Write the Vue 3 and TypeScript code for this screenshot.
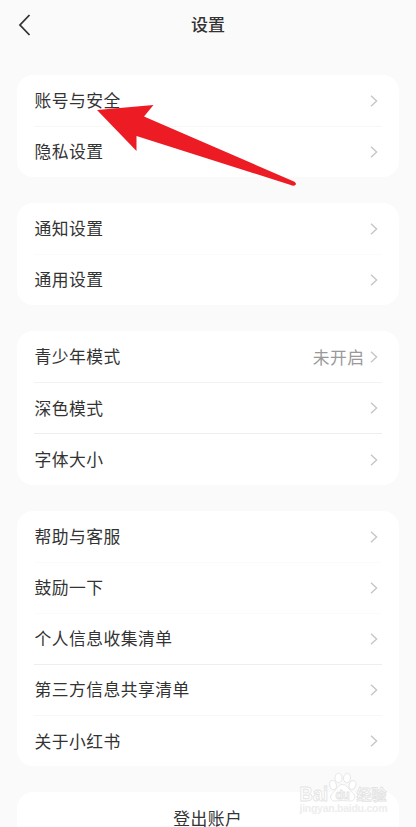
<script setup lang="ts">
type Tone = 'none' | 'faint' | 'soft' | 'light' | 'clear'

interface Item {
  label: string
  value?: string
  line: Tone
}

const groups: Item[][] = [
  [
    { label: '账号与安全', line: 'soft' },
    { label: '隐私设置', line: 'none' },
  ],
  [
    { label: '通知设置', line: 'faint' },
    { label: '通用设置', line: 'none' },
  ],
  [
    { label: '青少年模式', value: '未开启', line: 'light' },
    { label: '深色模式', line: 'clear' },
    { label: '字体大小', line: 'none' },
  ],
  [
    { label: '帮助与客服', line: 'faint' },
    { label: '鼓励一下', line: 'faint' },
    { label: '个人信息收集清单', line: 'clear' },
    { label: '第三方信息共享清单', line: 'soft' },
    { label: '关于小红书', line: 'none' },
  ],
]
</script>

<template>
  <main class="screen">
    <header class="bar">
      <svg class="back" width="14" height="24" viewBox="0 0 14 24">
        <path d="M11.5 2 L2 12 L11.5 22" />
      </svg>
      <h1 class="title">设置</h1>
    </header>

    <div class="groups">
      <section v-for="(group, g) in groups" :key="g" class="card">
        <div v-for="item in group" :key="item.label" class="row" :class="item.line">
          <span class="label">{{ item.label }}</span>
          <span v-if="item.value" class="value">{{ item.value }}</span>
          <svg class="chevron" width="8" height="12" viewBox="0 0 8 12">
            <path d="M1 0.7 L6.6 6 L1 11.3" />
          </svg>
        </div>
      </section>
      <section class="card">
        <div class="row logout"><span class="label">登出账户</span></div>
      </section>
    </div>

    <svg class="arrow" width="204" height="90" viewBox="94 100 204 90">
      <path d="M97 110 L153.500 105 L144 116.500 L294.500 181.800 Q297.500 184.200 294.500 185.500 Q293 186 290 184.800 L136.500 136 L136.500 151 Z" />
    </svg>

    <svg class="watermark" width="98" height="48" viewBox="294 770 98 48">
      <g class="mark">
        <ellipse cx="333" cy="785" rx="3.300" ry="4.700" transform="rotate(-14 333 785)" />
        <ellipse cx="338.500" cy="778" rx="3.500" ry="4.700" />
        <ellipse cx="347" cy="778" rx="3.500" ry="4.700" transform="rotate(8 347 778)" />
        <ellipse cx="352.500" cy="785" rx="3.300" ry="4.600" transform="rotate(16 352.500 785)" />
        <path d="M342.500 784.500 C338 784.500 337 789.500 333 792.500 C328.500 796.500 331 801.500 335.500 801 Q342.500 800 349.500 801 C354.500 801.500 357 796.500 352.500 792.500 C348 789.500 347.500 784.500 342.500 784.500 Z" />
        <text class="brand" x="299.500" y="800.500" textLength="28.5" lengthAdjust="spacingAndGlyphs">Bai</text>
        <text class="du" x="335.500" y="798.500" textLength="14">du</text>
        <text class="cn" x="356.500" y="799.500" textLength="30">经验</text>
      </g>
      <text class="site" x="299.500" y="812" textLength="88">jingyan.baidu.com</text>
    </svg>
  </main>
</template>

<style>
body {
  background: #fafafa;
  overflow: hidden;
}
</style>

<style scoped>
.screen {
  position: relative;
  box-sizing: border-box;
  height: 827px;
  overflow: hidden;
  background: #fafafa;
  color: #333;
  font-family: "Noto Sans CJK SC", sans-serif;
}

.bar {
  display: grid;
  grid-template-columns: 1fr auto 1fr;
  align-items: center;
  height: 49px;
  padding: 0 18px;
}

.back path {
  fill: none;
  stroke: #333;
  stroke-width: 1.8;
}

.title {
  margin: 0;
  padding-bottom: 2px;
  font-size: 17px;
  font-weight: 500;
  line-height: 24px;
}

.groups {
  display: flex;
  flex-direction: column;
  gap: 25.9px;
  padding: 25.550px 17px 0;
}

.card {
  flex: none;
  padding: 0 17px;
  border-radius: 16px;
  background: #fff;
}

.row {
  display: flex;
  align-items: center;
  box-sizing: border-box;
  height: 51.2px;
  padding: 1px 4px 0 0.400px;
  font-size: 16.8px;
  letter-spacing: 0.47px;
  line-height: 24px;
}

.row + .row {
  background: linear-gradient(var(--line, #fff), var(--line, #fff)) top right / 100% 1px no-repeat;
}

.faint + .row { --line: #fbfbfb; }
.soft + .row { --line: #f7f7f7; }
.light + .row { --line: #f2f2f2; }
.clear + .row { --line: #eee; }

.label {
  flex: 1;
  padding-bottom: 1.600px;
}

.value {
  margin-right: 5.500px;
  padding-bottom: 1.200px;
  color: #999;
}

.chevron path {
  fill: none;
  stroke: #c6c6c6;
  stroke-width: 1.4;
}

.logout {
  padding-right: 1px;
  text-align: center;
}

.arrow {
  position: absolute;
  left: 94px;
  top: 100px;
  fill: #ed1c24;
}

.watermark {
  position: absolute;
  left: 294px;
  top: 770px;
}

.mark {
  fill: #fff;
  stroke: #e4e4e4;
  stroke-width: 0.9;
}

.brand {
  font: bold 20px "Liberation Sans", sans-serif;
}

.du {
  font: bold 12px "Liberation Sans", sans-serif;
}

.cn {
  font: bold 15px "Noto Sans CJK SC", sans-serif;
}

.site {
  fill: #ededed;
  font: bold 10.500px "Liberation Sans", sans-serif;
}
</style>
